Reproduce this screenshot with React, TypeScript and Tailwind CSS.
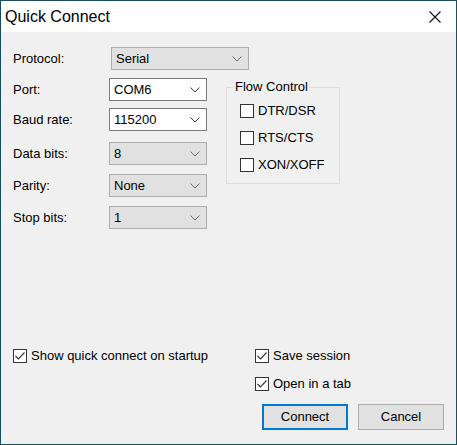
import React from "react";

const font = { fontFamily: '"Liberation Sans", Arial, sans-serif' };

function Chevron({ light }: { light?: boolean }) {
  return (
    <svg width="10" height="6" viewBox="0 0 10 6" className="shrink-0">
      <polyline
        points="0.5,0.5 5,5 9.5,0.5"
        fill="none"
        stroke={light ? "#6d6d6d" : "#3c3c3c"}
        strokeWidth="1"
      />
    </svg>
  );
}

function Combo({
  value,
  white,
  width = "w-[98px]",
}: {
  value: string;
  white?: boolean;
  width?: string;
}) {
  return (
    <div
      className={`${width} flex h-[23px] items-center justify-between border pl-[4px] pr-[6px] ${
        white ? "border-[#7a7a7a] bg-white" : "border-[#adadad] bg-[#e1e1e1]"
      }`}
    >
      <span className="text-[13px] text-black">{value}</span>
      <Chevron light={!white} />
    </div>
  );
}

function Check({ checked, label }: { checked?: boolean; label: string }) {
  return (
    <div className="flex items-center gap-[4px]">
      <div className="flex h-[14px] w-[14px] items-center justify-center border border-[#333333] bg-white">
        {checked && (
          <svg width="12" height="12" viewBox="0 0 12 12">
            <polyline points="1.5,6 4.5,9 10.5,2.5" fill="none" stroke="#3a3a3a" strokeWidth="1.2" />
          </svg>
        )}
      </div>
      <span className="text-[13px] leading-[15px] text-black">{label}</span>
    </div>
  );
}

function Row({ label, children, top }: { label: string; children: React.ReactNode; top: string }) {
  return (
    <div className={`flex items-center ${top}`}>
      <span className="w-[96px] text-[13px] text-black">{label}</span>
      {children}
    </div>
  );
}

export default function App() {
  return (
    <div style={font} className="flex h-[445px] w-[457px] flex-col border border-[#1d4d58] bg-[#f0f0f0]">
      {/* Title bar */}
      <div className="flex h-[31px] shrink-0 items-center justify-between bg-white pl-[4px] pr-[15px]">
        <span className="text-[16px] text-black">Quick Connect</span>
        <svg width="12" height="12" viewBox="0 0 12 12">
          <path d="M0.5 0.5 L11.5 11.5 M11.5 0.5 L0.5 11.5" stroke="#111111" strokeWidth="1.1" />
        </svg>
      </div>

      <div className="flex flex-1 flex-col px-[12px] pt-[15px] pb-[14px]">
        <Row label="Protocol:" top="">
          <div className="ml-[2px]">
            <Combo value="Serial" width="w-[138px]" />
          </div>
        </Row>

        <div className="mt-[8px] flex items-start">
          <div className="flex flex-col">
            <Row label="Port:" top="">
              <Combo value="COM6" white />
            </Row>
            <Row label="Baud rate:" top="mt-[7px]">
              <Combo value="115200" white />
            </Row>
            <Row label="Data bits:" top="mt-[11px]">
              <Combo value="8" />
            </Row>
            <Row label="Parity:" top="mt-[9px]">
              <Combo value="None" />
            </Row>
            <Row label="Stop bits:" top="mt-[9px]">
              <Combo value="1" />
            </Row>
          </div>

          {/* Flow control group */}
          <div className="relative ml-[19px] mt-[9px] h-[97px] w-[114px] border border-[#dcdcdc]">
            <span className="absolute left-[7px] top-[-9px] bg-[#f0f0f0] px-[1px] text-[13px] leading-[16px] text-black">
              Flow Control
            </span>
            <div className="flex flex-col gap-[12px] pl-[13px] pt-[15px]">
              <Check label="DTR/DSR" />
              <Check label="RTS/CTS" />
              <Check label="XON/XOFF" />
            </div>
          </div>
        </div>

        <div className="mt-auto flex">
          <div className="w-[242px]">
            <Check checked label="Show quick connect on startup" />
          </div>
          <div className="flex flex-1 flex-col">
            <Check checked label="Save session" />
            <div className="mt-[13px]">
              <Check checked label="Open in a tab" />
            </div>
            <div className="mt-[13px] flex justify-end gap-[10px]">
              <button className="h-[26px] w-[86px] border-2 border-[#0078d7] bg-[#e1e1e1] text-[13px] text-black">
                Connect
              </button>
              <button className="h-[26px] w-[86px] border border-[#adadad] bg-[#e1e1e1] text-[13px] text-black">
                Cancel
              </button>
            </div>
          </div>
        </div>
      </div>
    </div>
  );
}
